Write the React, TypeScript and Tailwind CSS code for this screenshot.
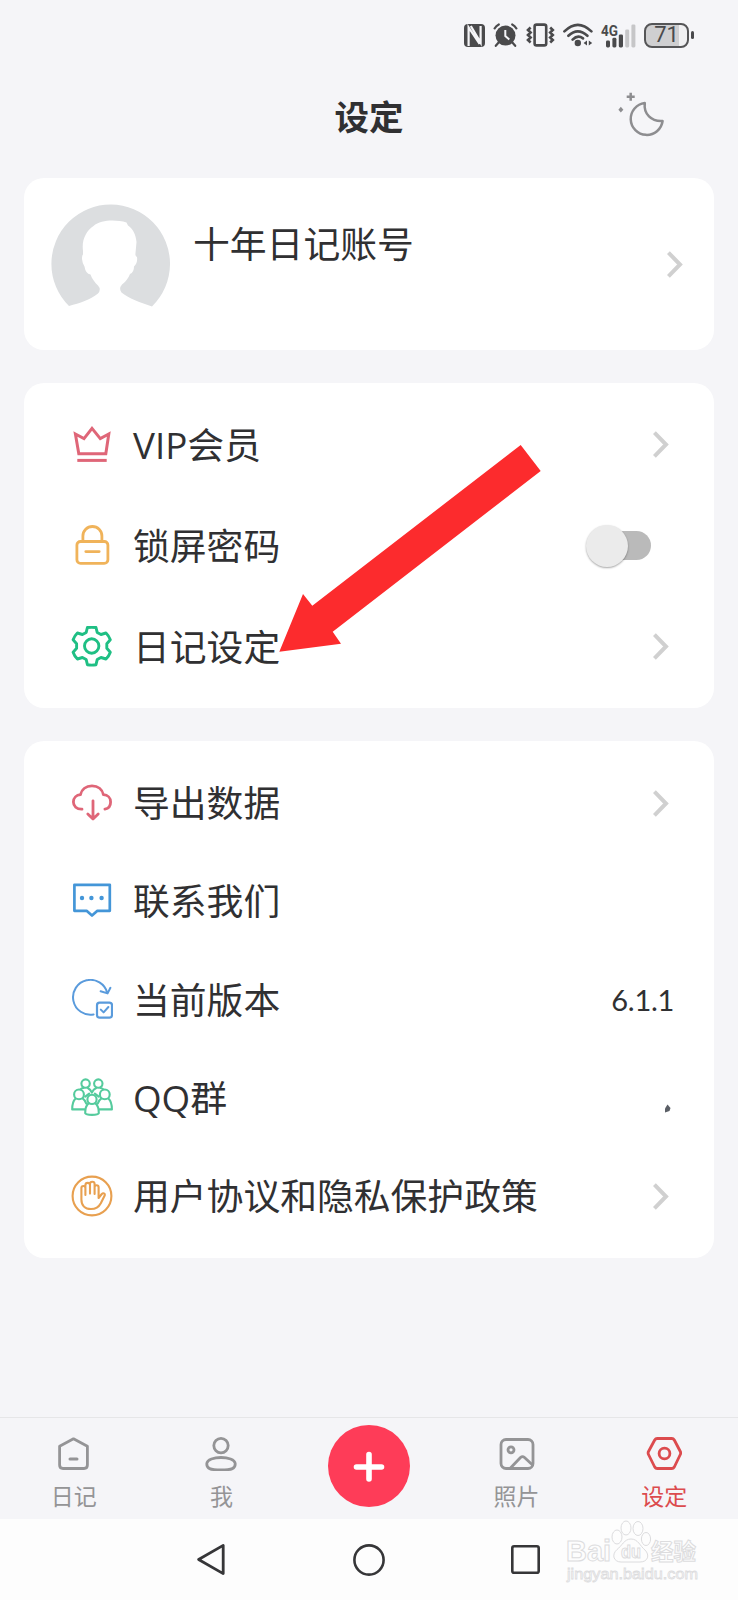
import React, { useState } from 'react'

const Chevron = () => (
  <svg width="16" height="27" viewBox="0 0 16 27" fill="none" stroke="#d0d0d0" strokeWidth="4">
    <path d="M1.4 1.6 13 13.5 1.4 25.4" />
  </svg>
)

const Icon = ({ color, width = 2.6, children }) => (
  <svg
    className="shrink-0"
    width="42"
    height="42"
    viewBox="0 0 42 42"
    fill="none"
    stroke={color}
    strokeWidth={width}
    strokeLinecap="round"
    strokeLinejoin="round"
  >
    {children}
  </svg>
)

const CrownIcon = () => (
  <Icon color="#df6678" width={3}>
    <path
      d="M4.4 10 13 14.6 21 4.4 29.3 14.6 37.8 10 34.8 29.8H7.8Z"
      strokeLinejoin="miter"
    />
    <path d="M6.3 36.4h29.4" strokeLinecap="butt" />
  </Icon>
)

const LockIcon = () => (
  <Icon color="#f0b35a" width={2.8}>
    <rect x="5.9" y="16.5" width="31" height="21.8" rx="3.6" />
    <path d="M11.9 16v-5a9.5 9.5 0 0 1 19 0v5M14.8 26.6h13.4" />
  </Icon>
)

const GearIcon = () => (
  <Icon color="#1fbf84" width={2.9}>
    <circle cx="20.7" cy="20" r="7.2" />
    <path d="M16.4 1.5Q20.7.9 25 1.5L26.2 6.4 30 8.5 35 7Q37.900 9.800 39.300 13.800L35.800 17.700V22.300L39.300 26.200Q37.900 30.200 35 33L30 31.500 26.200 33.600 25 38.700Q20.700 39.500 16.400 38.700L15.200 33.600 11.400 31.500 6.400 33Q3.500 30.200 2.100 26.200L5.600 22.300V17.700L2.100 13.800Q3.500 9.800 6.400 7L11.400 8.500 15.200 6.400Z" />
  </Icon>
)

const CloudIcon = () => (
  <Icon color="#df6678" width={2.8}>
    <path d="M11 27.2C5.6 27.4 2.400 24 2.400 20c0-4 3-7 7.100-7.400C10.600 7.400 15 3.800 21 3.800S31.400 7.400 32.400 12.700c4.400.2 7.200 3.400 7.200 7.200 0 3.900-2.300 6.600-5.700 7.200M22 18.800v18M16.800 32l5.200 5 5.200-5" />
  </Icon>
)

const ChatIcon = () => (
  <Icon color="#4496d8" width={2.7}>
    <path d="M3.400 4.800H38.800V30.800H26.400L21 35.600 15.600 30.800H3.400Z" />
    <g fill="#4496d8" stroke="none">
      <circle cx="11" cy="18" r="2.2" />
      <circle cx="20.400" cy="18" r="2.2" />
      <circle cx="30.600" cy="18" r="2.2" />
    </g>
  </Icon>
)

const VersionIcon = () => (
  <Icon color="#5a9bdc" width={2}>
    <path d="M22.600 35.400A17.400 17.400 0 1 1 36.300 14M29.600 12.200 36.600 14.400 39.400 8.800" />
    <rect x="26" y="23.600" width="15" height="15" rx="2.6" strokeWidth="2.2" />
    <path d="M29.800 30.600 32.600 33.400 37.400 28" />
  </Icon>
)

const GroupIcon = () => (
  <Icon color="#55cb9d" width={2.1}>
    <circle cx="14.6" cy="6.600" r="4.200" />
    <circle cx="27.300" cy="6.600" r="4.200" />
    <circle cx="8" cy="17.400" r="4.900" />
    <circle cx="33.800" cy="17.400" r="4.900" />
    <circle cx="21" cy="22.400" r="4.600" />
    <path d="M9.600 12.200Q11 11 12.600 11M16.800 11Q19.600 12.400 20.900 15.600 22.200 12.400 25.200 11M29.400 11Q31 11.200 32.200 12.200M14.200 19.600 18.200 16.600M27.800 19.600 23.800 16.600" />
    <path d="M4.600 21.600C2 24 1.200 27 1.200 32.400H13.600M11.600 21.400Q14.400 23.400 15.200 26.600" />
    <path d="M37.400 21.600C40 24 40.900 27 40.900 32.400H28.400M30.400 21.400Q27.600 23.400 26.800 26.600" />
    <path d="M17.800 26.200C15 28.400 14.200 31 14.200 36.200 15 38.400 27 38.400 27.800 36.200 27.800 31 27 28.400 24.200 26.200" />
  </Icon>
)

const HandIcon = () => (
  <Icon color="#e8a050" width={2.1}>
    <circle cx="21" cy="21" r="19.400" />
    <path d="M14.400 20V13a2 2 0 0 0-4 0v11.500C10.400 30.400 14 34 20 34c5.400 0 8-2.400 9.800-5.800l4-8c.6-1.600-1.600-2.600-3-1.200l-3.200 4V12.200a2 2 0 0 0-4 0V19M14.400 19V10.200a2.200 2.200 0 0 1 4.600 0V18.600M19 18.600V9a2.200 2.200 0 0 1 4.600 0V19" />
  </Icon>
)

const Label = ({ children }) => (
  <span className="text-[36.8px] leading-[44px] text-[#303032] whitespace-nowrap">{children}</span>
)

const StatusBar = () => (
  <div className="flex h-[70px] items-center justify-end pr-11 text-[#4a4a4c]">
    <svg className="mr-2" width="21" height="23" viewBox="0 0 21 23">
      <rect width="21" height="23" rx="4" fill="currentColor" />
      <path d="M4.600 22V3.400L15.600 20M6.800 2 16.600 18.600V2" fill="none" stroke="#f5f5f8" strokeWidth="2.200" />
    </svg>
    <svg className="mr-2" width="25" height="24" viewBox="0 0 25 24" fill="none" stroke="currentColor">
      <circle cx="12.500" cy="12.600" r="10" fill="currentColor" stroke="none" />
      <path d="M1.600 5.400Q3 2.800 5.800 1.400M23.400 5.400Q22 2.800 19.200 1.400M5.400 19.800 2.800 22.800M19.600 19.800l2.600 3" strokeWidth="2.200" strokeLinecap="round" />
      <path d="M12.300 7v6l4 3.400" stroke="#f5f5f8" strokeWidth="2" />
    </svg>
    <svg className="mr-2" width="29" height="24" viewBox="0 0 29 24" fill="none" stroke="currentColor" strokeWidth="2.600">
      <rect x="8.600" y="1.600" width="11.600" height="20.800" rx="2" />
      <path d="M4.600 4.500 2 7l2.600 2.500L2 12l2.600 2.500L2 17l2.600 2.500M24.200 4.500 26.800 7l-2.600 2.500 2.600 2.500-2.600 2.500 2.600 2.500-2.600 2.500" />
    </svg>
    <svg className="mr-2" width="30" height="24" viewBox="0 0 30 24" fill="none" stroke="currentColor" strokeWidth="2.600" strokeLinecap="round">
      <path d="M1.400 8.400Q14.800-4.600 28.400 8.400M5.400 12.800Q14.800 3.800 24.400 12.800M9.600 16.600Q14.800 11.400 20 15.400" />
      <circle cx="14.800" cy="20" r="3.200" fill="currentColor" stroke="none" />
      <path d="M24 17.600v5l-3.400-2.500zM25.800 17.600v5l3.400-2.500z" fill="currentColor" stroke="none" />
    </svg>
    <svg className="mr-2 overflow-visible" width="35" height="25" viewBox="0 0 35 25">
      <text x="0" y="12.500" fontSize="15" fontWeight="700" fill="currentColor" textLength="17" lengthAdjust="spacingAndGlyphs" fontFamily="Roboto, sans-serif">
        4G
      </text>
      <g fill="currentColor">
        <rect x="5" y="17.600" width="4" height="6.800" rx="1.400" />
        <rect x="11.400" y="14.800" width="4" height="9.600" rx="1.400" />
        <rect x="17.800" y="11.400" width="4.200" height="13" rx="1.400" />
      </g>
      <g fill="#c6c6c8">
        <rect x="24.200" y="6.400" width="4" height="18" rx="1.400" />
        <rect x="30.400" y="1.400" width="4" height="23" rx="1.400" />
      </g>
    </svg>
    <div className="flex items-center gap-[2px]">
      <div className="flex h-[25px] w-[45px] items-center justify-center rounded-[8px] border-2 border-[#555557] bg-[linear-gradient(to_right,#cfcfd1_80%,#f0f0f2_80%)] font-[Roboto,sans-serif] text-[22px] leading-none">
        71
      </div>
      <div className="h-2 w-[3px] rounded-sm bg-[#4a4a4c]" />
    </div>
  </div>
)

const Header = () => (
  <header className="grid h-[94px] grid-cols-3 items-center">
    <div />
    <h1 className="text-center text-[34.5px] leading-[44px] font-bold text-[#303032]">设定</h1>
    <svg
      className="-mt-[6px] mr-[72px] justify-self-end"
      width="48"
      height="45"
      viewBox="0 0 48 45"
      fill="none"
      stroke="#8d8d90"
      strokeWidth="2.500"
      strokeLinejoin="round"
    >
      <path d="M26.800 11A16 16 0 1 0 44.600 29C33.400 29.800 25.400 22 26.800 11Z" />
      <path d="M12.700.8v8M8.700 4.800h8" />
      <path d="M2.800 14.800 5.400 17.700 2.800 20.600.4 17.700Z" fill="#8d8d90" stroke="none" />
    </svg>
  </header>
)

const Account = () => (
  <section className="mx-6 mt-[14px] flex h-[172px] rounded-[20px] bg-white">
    <svg className="mt-[26px] ml-[27px]" width="119" height="119" viewBox="0 0 119 119">
      <path
        d="M18 102A59.3 59.3 0 1 1 101 102.4C90 99 77 94 70.5 88.5Q67.5 84.5 71 80.5C75.5 77 77.5 73.5 79 70Q83 68.5 83 62.5C86 60 86.500 56 86 53Q84 52.500 84.500 49L85.500 38C85 31 81.500 24 77 21.500L75.500 18.500C65 15.500 50 15.500 42.500 22C35 27 30.500 36 32 47V50.500Q31 51 31 55 31.500 60 33.500 62.500 34.500 69.500 39.500 70.500C41 75 44 78.500 47 81.500Q50.500 85.500 47 89.500C39 96 29 99 18 102Z"
        fill="#dcdee0"
      />
    </svg>
    <div className="mt-[44px] ml-[23px] grow">
      <Label>十年日记账号</Label>
    </div>
    <div className="mr-[31px] self-center">
      <Chevron />
    </div>
  </section>
)

const Row = ({ icon, label, height, children }) => (
  <div className={`flex items-center pr-[45px] pl-[47px] ${height}`}>
    {icon}
    <div className="ml-[20px] grow">
      <Label>{label}</Label>
    </div>
    {children}
  </div>
)

const Toggle = () => {
  const [on, setOn] = useState(false)
  return (
    <button
      onClick={() => setOn(!on)}
      className={`mr-[18px] flex h-[29px] w-[65px] items-center rounded-full bg-[linear-gradient(to_right,transparent_30%,#bababa_30%)] ${on ? 'justify-end' : 'justify-start'}`}
    >
      <span className="h-[42px] w-[42px] rounded-full bg-[#ebebeb] shadow-[0_1px_2px_rgba(0,0,0,0.35)]" />
    </button>
  )
}

const Tab = ({ label, active = false, children }) => (
  <div className={`flex flex-col items-center pt-[17px] ${active ? 'text-[#dc4b4e]' : 'text-[#949496]'}`}>
    <svg width="36" height="36" viewBox="0 0 36 36" fill="none" stroke="currentColor" strokeWidth="2.8" strokeLinecap="round" strokeLinejoin="round">
      {children}
    </svg>
    <span className="mt-[10px] text-[23px] leading-[30px]">{label}</span>
  </div>
)

const TabBar = () => (
  <nav className="grid h-[102px] grid-cols-5 border-t border-[#e6e6e8]">
    <Tab label="日记">
      <path d="M3.600 11.200 17.500 3.800 31.400 11.200V30Q31.400 33.500 28 33.500H7Q3.600 33.500 3.600 30Z" />
      <path d="M14 24h7" strokeWidth="3" />
    </Tab>
    <Tab label="我">
      <circle cx="18" cy="10.600" r="7.200" />
      <path d="M3.800 28.500C4.500 20.500 31.500 20.500 32.200 28.500 32.500 33.500 29 35 18 35S3.500 33.500 3.800 28.500Z" />
    </Tab>
    <div className="flex justify-center pt-[7px]">
      <div className="flex h-[82px] w-[82px] items-center justify-center rounded-full bg-[#fe3c58]">
        <svg width="32" height="32" viewBox="0 0 32 32" stroke="#fff" strokeWidth="5.600" strokeLinecap="round">
          <path d="M16 4.500v24.500M3.500 17h25" />
        </svg>
      </div>
    </div>
    <Tab label="照片">
      <rect x="2" y="4.500" width="32" height="29" rx="5" />
      <circle cx="12" cy="14.800" r="3" />
      <path d="M11.500 33 21.500 22.500Q23.500 20.800 25.500 22.500L33 29.500" />
    </Tab>
    <Tab label="设定" active>
      <path d="M11.200 3.500H25.800Q27.400 3.500 28.300 5L34.300 16.500Q35.100 18 34.300 19.500L28.300 32Q27.400 33.500 25.800 33.500H11.200Q9.600 33.500 8.700 32L2.500 19.500Q1.700 18 2.500 16.500L8.700 5Q9.600 3.500 11.200 3.500Z" />
      <circle cx="18.500" cy="18.500" r="5.400" />
    </Tab>
  </nav>
)

const Watermark = () => (
  <svg
    className="absolute top-0 right-[36px]"
    width="138"
    height="70"
    viewBox="0 0 138 70"
    fill="#fdfdfd"
    stroke="#dcdcde"
    strokeWidth="1"
    fontFamily="'Liberation Sans', 'Noto Sans CJK SC', sans-serif"
    fontWeight="700"
  >
    <text x="2" y="42" fontSize="29" textLength="45" lengthAdjust="spacingAndGlyphs">
      Bai
    </text>
    <ellipse cx="53" cy="18" rx="5" ry="7" />
    <ellipse cx="62" cy="9" rx="5" ry="7" />
    <ellipse cx="74" cy="9.500" rx="5" ry="7" />
    <ellipse cx="82" cy="20" rx="4.600" ry="6.500" />
    <path d="M67 20C60 20 58 27 53 30.500 47 36 50 43 57 43H76C84 43 86 36 81 31 76 27 74 20 67 20Z" />
    <text x="57" y="39" fontSize="18" textLength="20" lengthAdjust="spacingAndGlyphs">
      du
    </text>
    <text x="87" y="41" fontSize="23" textLength="45" lengthAdjust="spacingAndGlyphs">
      经验
    </text>
    <text x="3" y="60" fontSize="15.5" fontWeight="400" strokeWidth="0.8" textLength="131" lengthAdjust="spacingAndGlyphs">
      jingyan.baidu.com
    </text>
  </svg>
)

const SystemBar = () => (
  <div className="relative flex h-[81px] items-center bg-[#fdfdfd]">
    <svg className="ml-[195px]" width="30" height="33" viewBox="0 0 30 33" fill="none" stroke="#363638" strokeWidth="2.8" strokeLinejoin="round">
      <path d="M3.600 16.500 28.200 2.400V30.600Z" />
    </svg>
    <svg className="ml-[127px]" width="34" height="34" viewBox="0 0 34 34" fill="none" stroke="#363638" strokeWidth="2.600">
      <circle cx="17" cy="17" r="14.600" />
    </svg>
    <svg className="ml-[125px]" width="29" height="29" viewBox="0 0 29 29" fill="none" stroke="#363638" strokeWidth="2.600">
      <rect x="1.300" y="1.300" width="26.400" height="26.400" rx="1.800" />
    </svg>
    <Watermark />
  </div>
)

export default function App() {
  return (
    <div className="flex h-[1600px] w-[738px] flex-col overflow-hidden bg-[#f5f5f8] font-['Open_Sans','Noto_Sans_CJK_SC',sans-serif]">
      <StatusBar />
      <Header />
      <Account />
      <section className="relative mx-6 mt-[33px] h-[325px] rounded-[20px] bg-white pt-[11px]">
        <Row icon={<CrownIcon />} label="VIP会员" height="h-[101px]">
          <Chevron />
        </Row>
        <Row icon={<LockIcon />} label="锁屏密码" height="h-[101px]">
          <Toggle />
        </Row>
        <Row icon={<GearIcon />} label="日记设定" height="h-[101px]">
          <Chevron />
        </Row>
        {/* pointer over the diary settings row */}
        <svg className="absolute top-[61px] left-[254px]" width="264" height="210" viewBox="0 0 264 210">
          <path d="M242.700 1 262.700 27 54.700 187.700 63 199.700 1.300 207.700 25 150 34.300 161.700Z" fill="#fc2b2d" />
        </svg>
      </section>
      <section className="mx-6 mt-[33px] h-[517px] rounded-[20px] bg-white pt-[13px]">
        <Row icon={<CloudIcon />} label="导出数据" height="h-[98px]">
          <Chevron />
        </Row>
        <Row icon={<ChatIcon />} label="联系我们" height="h-[98.5px]" />
        <Row icon={<VersionIcon />} label="当前版本" height="h-[98px]">
          <span className="-mr-[5px] font-[Lato,sans-serif] text-[29px] tracking-[-0.3px] text-[#303032]">6.1.1</span>
        </Row>
        <Row icon={<GroupIcon />} label="QQ群" height="h-[98.5px]">
          <svg className="mt-[21px] -mr-[2px]" width="7" height="9" viewBox="0 0 7 9">
            <path d="M3.500.5 6.500 4 5.500 7 1 8.500V4.500Z" fill="#5b5f66" />
          </svg>
        </Row>
        <Row icon={<HandIcon />} label="用户协议和隐私保护政策" height="h-[98.5px]">
          <Chevron />
        </Row>
      </section>
      <div className="grow" />
      <TabBar />
      <SystemBar />
    </div>
  )
}
